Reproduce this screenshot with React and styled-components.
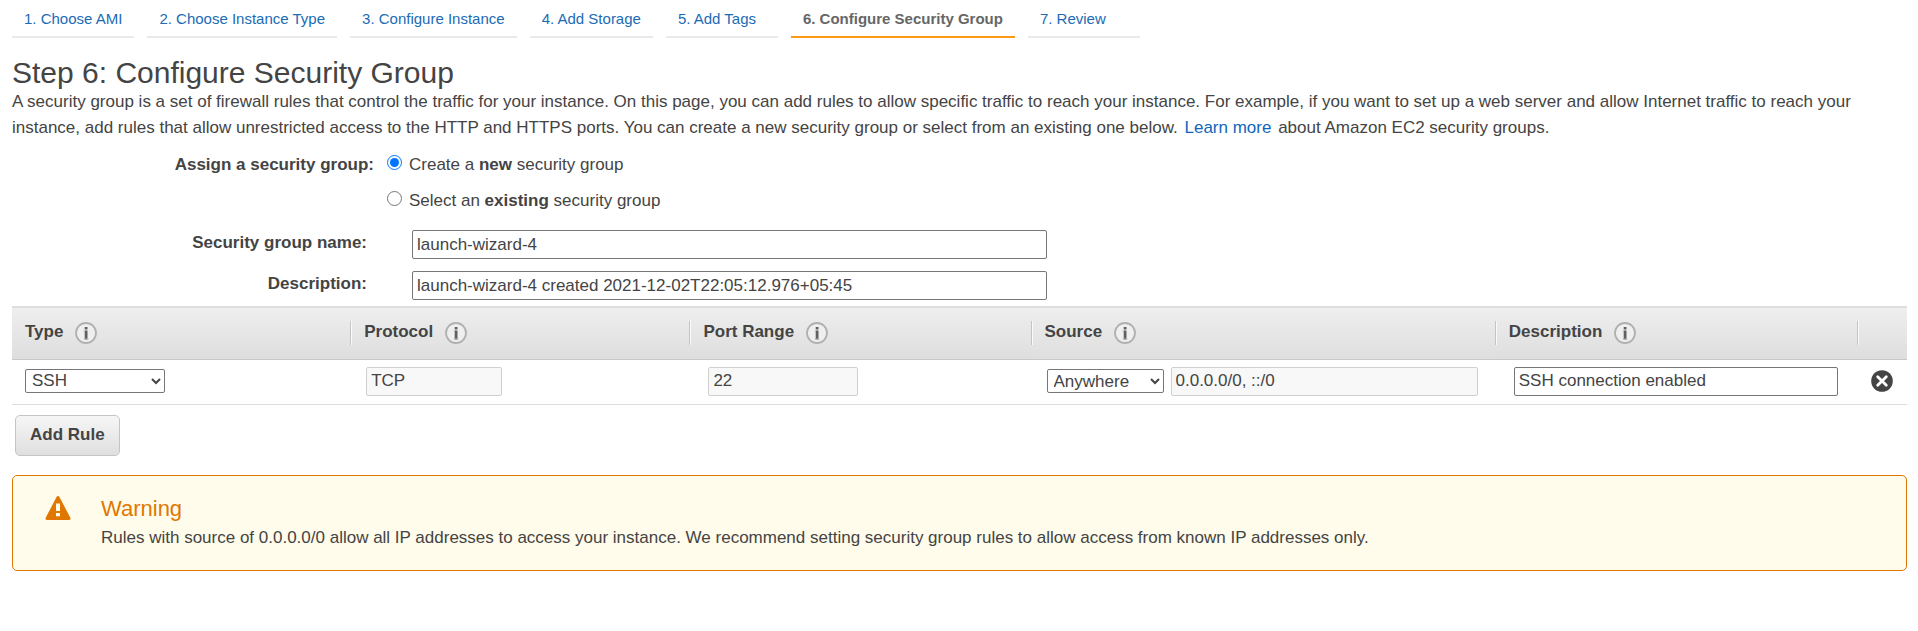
import React, { useState } from "react";
import styled, { createGlobalStyle } from "styled-components";

const GlobalStyle = createGlobalStyle`
  *, *::before, *::after { box-sizing: border-box; }
  body {
    margin: 0;
    background: #fff;
    color: #444;
    font: 17px/26px "Liberation Sans", Arial, sans-serif;
  }
  input, select, button { font: inherit; color: inherit; margin: 0; }
`;

const Page = styled.main`
  padding: 0 11px 24px 12px;
`;

const Steps = styled.nav`
  display: flex;
  gap: 13px;
`;

const Step = styled.a`
  min-width: ${(p) => (p.$wide ? "112px" : "0")};
  padding: 9px 12px 7px;
  border-bottom: 2px solid ${(p) => (p.$current ? "#ff9914" : "#eaeaea")};
  color: ${(p) => (p.$current ? "#666" : "#1b6bb5")};
  font-size: 15px;
  font-weight: ${(p) => (p.$current ? "bold" : "normal")};
  line-height: 20px;
  text-decoration: none;
  white-space: nowrap;
`;

const Title = styled.h1`
  margin: 18px 0 0;
  font-size: 30px;
  font-weight: normal;
  line-height: 33px;
`;

const Intro = styled.p`
  margin: 0;
`;

const TextLink = styled.a`
  display: inline-block;
  margin: 0 2px;
  color: #1166bb;
  text-decoration: none;
`;

const Form = styled.form`
  padding-top: 11px;
`;

const Choices = styled.fieldset`
  display: flex;
  gap: 13px;
  margin: 0 0 16px;
  padding: 0;
  border: 0;
`;

const ChoicesLabel = styled.div`
  width: 362px;
  font-weight: bold;
  text-align: right;
`;

const ChoiceList = styled.div`
  display: flex;
  flex-direction: column;
  gap: 10px;
`;

const Choice = styled.label`
  display: flex;
  align-items: flex-start;
  gap: 7px;
`;

const Radio = styled.input`
  width: 15px;
  height: 15px;
  && { margin-top: 3px; }
`;

const Field = styled.div`
  display: flex;
  align-items: flex-start;
  gap: 45px;
  margin-bottom: ${(p) => (p.$last ? "6px" : "12px")};
`;

const FieldLabel = styled.label`
  width: 355px;
  font-weight: bold;
  text-align: right;
`;

const TextInput = styled.input`
  width: ${(p) => p.$width};
  height: 29px;
  padding: 0 4px;
  border: 1px solid #767676;
  border-radius: 2px;
  background: #fff;
  && { color: #444; }

  &:disabled {
    border-color: #d0d0d0;
    background: #f8f8f8;
  }
`;

const Select = styled.select`
  width: ${(p) => p.$width};
  height: 24px;
  padding: 0 2px;
  border: 1px solid #767676;
  border-radius: 2px;
  background: #fff;
`;

const RulesTable = styled.table`
  width: 100%;
  border-collapse: collapse;
  table-layout: fixed;
`;

const Col = styled.col`
  width: ${(p) => p.$width};
`;

const HeadRow = styled.tr`
  height: 53px;
  border-top: 1px solid #ddd;
  border-bottom: 1px solid #c8c8c8;
  background: linear-gradient(#eee, #dedede);
`;

const HeadCell = styled.th`
  padding: 0;
  text-align: left;
`;

const HeadLabel = styled.div`
  display: flex;
  align-items: center;
  gap: 12px;
  height: 24px;
  padding-left: 13px;
  border-right: ${(p) => (p.$last ? "0" : "1px solid #c4c4c4")};
  box-shadow: ${(p) => (p.$last ? "none" : "1px 0 #fafafa")};
`;

const HeadText = styled.span`
  padding-bottom: 2px;
`;

const RuleRow = styled.tr`
  height: 45px;
  border-bottom: 1px solid #ddd;
`;

const RuleCell = styled.td`
  padding: 0 ${(p) => p.$right || "20px"} 2px ${(p) => p.$left || "13px"};
`;

const SourceFields = styled.div`
  display: flex;
  align-items: center;
  gap: 7px;
`;

const IconButton = styled.button`
  display: flex;
  padding: 0;
  border: 0;
  background: none;
`;

const AddButton = styled.button`
  display: block;
  && { margin: 10px 3px 19px; }
  height: 41px;
  padding: 0 14px 2px;
  border: 1px solid #c4c4c4;
  border-radius: 5px;
  background: linear-gradient(#f6f6f6, #dfdfdf);
  font-weight: bold;
`;

const Warning = styled.section`
  display: flex;
  gap: 30px;
  padding: 19px 32px 19px;
  border: 1px solid #e07700;
  border-radius: 5px;
  background: #fffceb;
`;

const WarningTitle = styled.h2`
  margin: 0 0 2px;
  color: #e07700;
  font-size: 22px;
  font-weight: normal;
  line-height: 28px;
`;

const WarningText = styled.p`
  margin: 0;
`;

const InfoIcon = () => (
  <svg width="22" height="22" viewBox="0 0 22 22" aria-hidden="true">
    <circle cx="11" cy="11" r="10" fill="#efefef" stroke="#b0b0b0" strokeWidth="1.8" />
    <path d="M9.7 5h2.8v2.4H9.7zM9.7 8.6h2.8v8.8H9.7z" fill="#606060" />
    <path d="M8.7 8.6h1v1.1h-1zM8.8 16.4h4.6v1H8.8z" fill="#b0b0b0" />
  </svg>
);

const RemoveIcon = () => (
  <svg width="22" height="22" viewBox="0 0 22 22" aria-hidden="true">
    <circle cx="11" cy="11" r="10.8" fill="#444" />
    <path d="M6.7 6.7l8.6 8.6M15.3 6.7l-8.6 8.6" stroke="#fff" strokeWidth="2.8" strokeLinecap="round" />
  </svg>
);

const WarningIcon = () => (
  <svg width="26" height="26" viewBox="0 0 26 26" aria-hidden="true">
    <path d="M13 2.5L24 23.5H2z" fill="#e07700" stroke="#e07700" strokeWidth="3" strokeLinejoin="round" />
    <path d="M11 8.5h4v7.5h-4zM11 18h4v3.3h-4z" fill="#fffceb" />
  </svg>
);

const steps = [
  "1. Choose AMI",
  "2. Choose Instance Type",
  "3. Configure Instance",
  "4. Add Storage",
  "5. Add Tags",
  "6. Configure Security Group",
  "7. Review",
];

const columns = [
  { label: "Type", width: "17.9%" },
  { label: "Protocol", width: "17.9%" },
  { label: "Port Range", width: "18%" },
  { label: "Source", width: "24.5%" },
  { label: "Description", width: "19.1%" },
];

export default function App() {
  const [mode, setMode] = useState("new");

  return (
    <Page>
      <GlobalStyle />
      <Steps aria-label="Launch steps">
        {steps.map((step, i) => (
          <Step
            key={step}
            href={`#step-${i + 1}`}
            $current={i === 5}
            $wide={i === 4 || i === 6}
            aria-current={i === 5 ? "step" : undefined}
          >
            {step}
          </Step>
        ))}
      </Steps>

      <Title>Step 6: Configure Security Group</Title>
      <Intro>
        A security group is a set of firewall rules that control the traffic for your instance. On this page, you can
        add rules to allow specific traffic to reach your instance. For example, if you want to set up a web server and
        allow Internet traffic to reach your instance, add rules that allow unrestricted access to the HTTP and HTTPS
        ports. You can create a new security group or select from an existing one below.{" "}
        <TextLink href="#learn-more">Learn more</TextLink> about Amazon EC2 security groups.
      </Intro>

      <Form onSubmit={(e) => e.preventDefault()}>
        <Choices aria-labelledby="assign-label">
          <ChoicesLabel id="assign-label">Assign a security group:</ChoicesLabel>
          <ChoiceList>
            <Choice>
              <Radio type="radio" name="mode" checked={mode === "new"} onChange={() => setMode("new")} />
              <span>
                Create a <b>new</b> security group
              </span>
            </Choice>
            <Choice>
              <Radio type="radio" name="mode" checked={mode === "existing"} onChange={() => setMode("existing")} />
              <span>
                Select an <b>existing</b> security group
              </span>
            </Choice>
          </ChoiceList>
        </Choices>
        <Field>
          <FieldLabel htmlFor="group-name">Security group name:</FieldLabel>
          <TextInput id="group-name" $width="635px" defaultValue="launch-wizard-4" />
        </Field>
        <Field $last>
          <FieldLabel htmlFor="group-description">Description:</FieldLabel>
          <TextInput
            id="group-description"
            $width="635px"
            defaultValue="launch-wizard-4 created 2021-12-02T22:05:12.976+05:45"
          />
        </Field>

        <RulesTable>
          <colgroup>
            {columns.map((c) => (
              <Col key={c.label} $width={c.width} />
            ))}
            <Col />
          </colgroup>
          <thead>
            <HeadRow>
              {columns.map((c) => (
                <HeadCell key={c.label} scope="col">
                  <HeadLabel>
                    <HeadText>{c.label}</HeadText>
                    <IconButton type="button" aria-label={`About ${c.label}`}>
                      <InfoIcon />
                    </IconButton>
                  </HeadLabel>
                </HeadCell>
              ))}
              <HeadCell scope="col" aria-label="Actions">
                <HeadLabel $last />
              </HeadCell>
            </HeadRow>
          </thead>
          <tbody>
            <RuleRow>
              <RuleCell>
                <Select aria-label="Type" $width="140px" defaultValue="SSH">
                  <option>SSH</option>
                </Select>
              </RuleCell>
              <RuleCell $left="15px">
                <TextInput aria-label="Protocol" $width="136px" defaultValue="TCP" disabled />
              </RuleCell>
              <RuleCell $left="18px">
                <TextInput aria-label="Port range" $width="150px" defaultValue="22" disabled />
              </RuleCell>
              <RuleCell $left="15px" $right="17px">
                <SourceFields>
                  <Select aria-label="Source" $width="117px" defaultValue="Anywhere">
                    <option>Anywhere</option>
                  </Select>
                  <TextInput aria-label="Source address" $width="307px" defaultValue="0.0.0.0/0, ::/0" disabled />
                </SourceFields>
              </RuleCell>
              <RuleCell $left="18px">
                <TextInput aria-label="Rule description" $width="100%" defaultValue="SSH connection enabled" />
              </RuleCell>
              <RuleCell $right="0">
                <IconButton type="button" aria-label="Remove rule">
                  <RemoveIcon />
                </IconButton>
              </RuleCell>
            </RuleRow>
          </tbody>
        </RulesTable>
        <AddButton type="button">Add Rule</AddButton>
      </Form>

      <Warning role="alert">
        <WarningIcon />
        <div>
          <WarningTitle>Warning</WarningTitle>
          <WarningText>
            Rules with source of 0.0.0.0/0 allow all IP addresses to access your instance. We recommend setting
            security group rules to allow access from known IP addresses only.
          </WarningText>
        </div>
      </Warning>
    </Page>
  );
}
